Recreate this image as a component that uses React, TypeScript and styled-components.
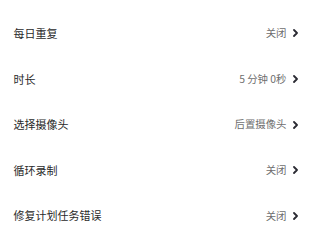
import React from "react";
import styled, { createGlobalStyle } from "styled-components";

const Global = createGlobalStyle`
  html, body { margin: 0; padding: 0; background: #ffffff; }
  body { font-family: "Noto Sans CJK SC", "Noto Sans", sans-serif; }
`;

const List = styled.div`
  display: flex;
  flex-direction: column;
  padding-top: 10.7px;
  width: 320px;
`;

const Row = styled.div`
  display: flex;
  align-items: center;
  justify-content: space-between;
  height: 45.6px;
  padding: 0 22px 0 13.5px;
`;

const Label = styled.span`
  font-size: 11px;
  line-height: 1;
  color: #2a2a2a;
`;

const Right = styled.div`
  display: flex;
  align-items: center;
  gap: 6.5px;
`;

const Value = styled.span`
  font-size: 10.4px;
  line-height: 1;
  color: #6e6e6e;
`;

const Chevron = () => (
  <svg width="5" height="8" viewBox="0 0 5 8" fill="none">
    <path d="M1 1 L4 4 L1 7" stroke="#2b2b33" strokeWidth="1.8" strokeLinecap="round" strokeLinejoin="round" />
  </svg>
);

const items = [
  { label: "每日重复", value: "关闭" },
  { label: "时长", value: "5 分钟 0秒" },
  { label: "选择摄像头", value: "后置摄像头" },
  { label: "循环录制", value: "关闭" },
  { label: "修复计划任务错误", value: "关闭" },
];

export default function App() {
  return (
    <>
      <Global />
      <List>
        {items.map((it) => (
          <Row key={it.label}>
            <Label>{it.label}</Label>
            <Right>
              <Value>{it.value}</Value>
              <Chevron />
            </Right>
          </Row>
        ))}
      </List>
    </>
  );
}
